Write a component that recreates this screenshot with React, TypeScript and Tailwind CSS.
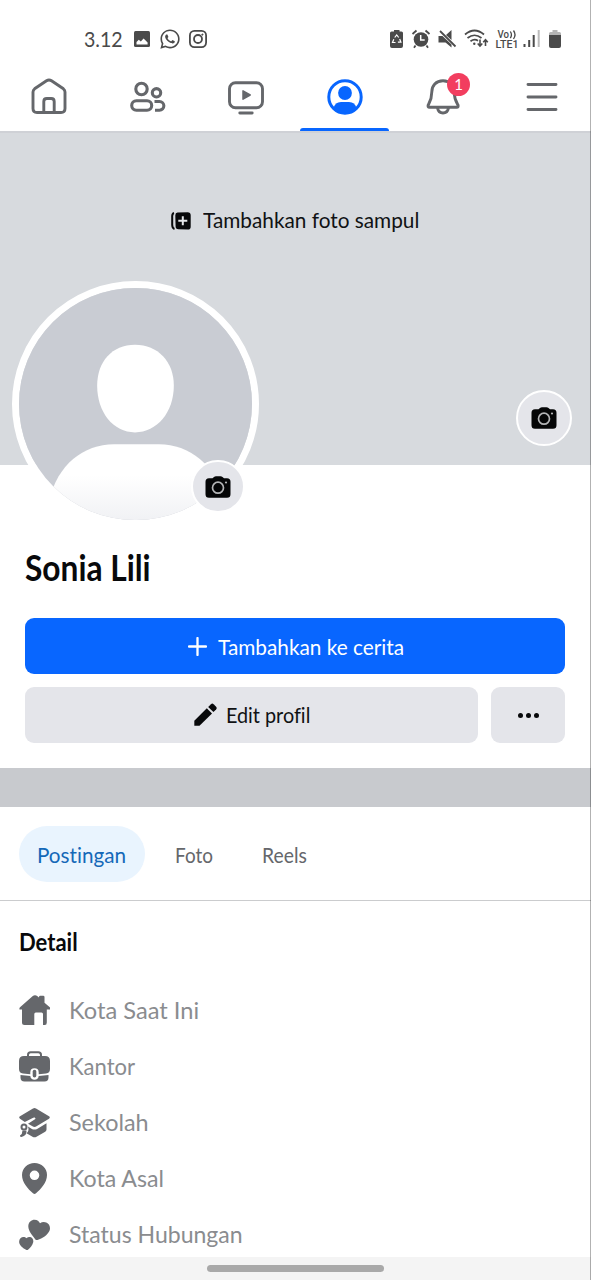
import type { ReactNode } from "react";
import { FaWhatsapp } from "react-icons/fa";

type LabelProps = {
  children: ReactNode;
  box: string;
  scale: string;
};

// condensed text: the box keeps the final width, the inner span is squeezed
function Label({ children, box, scale }: LabelProps) {
  return (
    <span className={`block shrink-0 whitespace-nowrap ${box}`}>
      <span className={`inline-block origin-left ${scale}`}>{children}</span>
    </span>
  );
}

function StatusBar() {
  return (
    <div className="flex h-[62px] items-start justify-between pl-[84px] pr-[29px] pt-[29px] text-[#4a4a4a]">
      <div className="flex h-5 items-center">
        <div className="text-[22px] leading-5">
          <Label box="w-[50px]" scale="scale-x-[0.89]">3.12</Label>
        </div>
        <svg className="h-4 w-4" viewBox="0 0 16 16">
          <rect width="16" height="16" rx="1.5" fill="currentColor" />
          <path d="M2.5 13.5V11l2.3-2.2 2 1.8 2.8-3.2 4 4v2.1z" fill="#fff" />
        </svg>
        <FaWhatsapp className="ml-[9px] h-[22px] w-[22px]" />
        <svg className="ml-2 h-[18px] w-[18px]" viewBox="0 0 18 18" fill="none" stroke="currentColor" strokeWidth="1.8">
          <rect x="0.9" y="0.9" width="16.2" height="16.2" rx="4.5" />
          <circle cx="9" cy="9" r="4" />
          <circle cx="13.4" cy="4.6" r="0.6" fill="currentColor" strokeWidth="1" />
        </svg>
      </div>
      <svg className="h-[26px] w-[173px] overflow-visible" viewBox="389 29 173 26" fill="none" stroke="currentColor">
        {/* power saving battery */}
        <path d="M394 30h5.500v1.500h2q1.500 0 1.500 1.500v13q0 2-2 2h-9q-2 0-2-2V33q0-1.500 1.500-1.500H394z" fill="currentColor" stroke="none" />
        <path d="M394.700 37.500l2-2.500 2 2.500M399.700 39l1.200 3.200h-3M395.500 42.500h-3l1.300-3.200" stroke="#fff" strokeWidth="1.200" />
        {/* alarm */}
        <circle cx="421" cy="39.500" r="7.300" fill="currentColor" stroke="none" />
        <path d="M412.500 34l4-3.500M429.500 34l-4-3.500M415.500 45.500l-1.500 2.300M426.500 45.500l1.500 2.300" strokeWidth="1.800" />
        <path d="M420.700 35v5h4" stroke="#fff" strokeWidth="1.500" />
        {/* muted */}
        <path d="M438.500 36h4l9 8.500v3l-6-5h-7zM446 35l5.500-5v10z" fill="currentColor" stroke="none" />
        <path d="M440 31l15.500 15.500" strokeWidth="1.800" />
        {/* wifi with traffic arrows */}
        <path d="M465 34.500q9.500-8 19 0M467.500 38q7-5.500 14 0M470.500 41.200q4-3 7.500-.5" strokeWidth="1.700" />
        <circle cx="474.300" cy="43.800" r="1.200" fill="currentColor" stroke="none" />
        <path d="M480 39.500v6M477.700 43.500l2.300 2.500 2.300-2.500M485.500 46v-6M483.200 42.200l2.300-2.500 2.300 2.500" strokeWidth="1.600" />
        <text x="497.500" y="37.500" fontSize="10" fontWeight="500" fill="currentColor" stroke="none" textLength="11.500" lengthAdjust="spacingAndGlyphs" className="font-[Roboto,sans-serif]">Vo</text>
        <path d="M510.300 31.500q2.300 3.300 0 6.700M513.500 30.500q3 4.200 0 8.500" strokeWidth="1.300" />
        <text x="495.500" y="48" fontSize="10.500" fontWeight="500" fill="currentColor" stroke="none" textLength="23" lengthAdjust="spacingAndGlyphs" className="font-[Roboto,sans-serif]">LTE1</text>
        {/* signal */}
        <path d="M524.500 44v3M529.200 40v7M533.700 35v12" strokeWidth="2" />
        <path d="M538.700 30v17" stroke="#bcbcbc" strokeWidth="2" />
        {/* battery */}
        <path d="M549 35v-1.500q0-1.500 1.500-1.500h2v-2h5v2h2q1.500 0 1.500 1.500V35z" fill="#b5b5b5" stroke="none" />
        <path d="M549 35h12v11q0 2-2 2h-8q-2 0-2-2z" fill="currentColor" stroke="none" />
      </svg>
    </div>
  );
}

const navIcons = [
  <path key="home" d="M6 17q0-2 1.600-3.200L19.500 5.800q2.500-1.700 5 0l11.900 8q1.600 1.200 1.600 3.200v16.500q0 4-4 4H10q-4 0-4-4zM16.800 37.500V26.500q0-3 3-3h4.400q3 0 3 3v11" />,
  <g key="friends" strokeWidth="3.1">
    <circle cx="15.500" cy="14" r="5.700" />
    <circle cx="30.500" cy="17.800" r="4.200" />
    <rect x="5.700" y="25.700" width="20" height="9.500" rx="4.700" />
    <path d="M28.500 26.500h5a4.300 4.300 0 0 1 0 8.700h-4.500" />
  </g>,
  <g key="video">
    <rect x="5.500" y="7.700" width="33" height="25" rx="6" />
    <path d="M15.800 38h12.400" strokeLinecap="round" />
    <path d="M19 15.800v8.400l7.200-4.200z" fill="currentColor" strokeWidth="1.500" strokeLinejoin="round" />
  </g>,
  <g key="profile">
    <circle cx="22" cy="22" r="16.200" strokeWidth="3" />
    <circle cx="22" cy="18" r="6.900" fill="currentColor" stroke="none" />
    <path d="M10.500 33q1.500-6 7.500-6h8q6 0 7.500 6-4.500 5-11.500 5t-11.500-5z" fill="currentColor" stroke="none" />
  </g>,
  <path key="bell" d="M22 5.800c-7 0-11.200 4.800-11.200 11.200 0 7-1.700 9.500-3.600 13q-.7 2.200 1.300 2.200h27.200q2 0 1.300-2.200C35 26.500 33.200 24 33.200 17 33.200 10.600 29 5.800 22 5.800zM16.500 33q1 5 5.500 5t5.500-5" />,
  <path key="menu" d="M8 9.500h28M8 22h28M8 34.500h28" strokeLinecap="round" />,
];

function NavBar() {
  return (
    <div className="grid h-[71px] grid-cols-6 border-b-2 border-[#cfd1d6]">
      {navIcons.map((icon, i) => (
        <div
          key={i}
          className={`relative flex flex-col items-center justify-between pt-[13px] ${i === 3 ? "text-[#0866ff]" : "text-[#65676b]"}`}
        >
          <svg className="h-11 w-11" viewBox="0 0 44 44" fill="none" stroke="currentColor" strokeWidth="2.900">
            {icon}
          </svg>
          {i === 3 && <div className="h-[3px] w-[89px] rounded-t-[3px] bg-[#0866ff]" />}
          {i === 4 && (
            <div className="absolute left-[53px] top-[11px] flex h-[23px] w-[23px] items-center justify-center rounded-full bg-[#f23e5f] text-[15px] text-white">
              1
            </div>
          )}
        </div>
      ))}
    </div>
  );
}

function CameraButton({ className }: { className: string }) {
  return (
    <div className={`absolute flex items-center justify-center rounded-full border-white bg-[#e4e5ea] ${className}`}>
      <svg className="h-[22px] w-[26px]" viewBox="0 0 26 22">
        <path d="M4 2.300h3.500L9 1q.8-.8 2-.8h4.500q1.200 0 2 .8l1.500 1.300H22Q25.500 2.300 25.500 5.800v12.500q0 3.500-3.500 3.500H4Q.5 21.800.5 18.300V5.800Q.5 2.300 4 2.300z" fill="#050607" />
        <circle cx="13" cy="11.700" r="5.500" fill="none" stroke="#b3b4b6" strokeWidth="1.700" />
        <circle cx="21" cy="6.500" r="1.100" fill="#b3b4b6" />
      </svg>
    </div>
  );
}

function Cover() {
  return (
    <div className="relative h-[332px] bg-[#d7dade]">
      <div className="flex items-center pl-[171px] pt-[74px] text-[22px] leading-7 text-[#101214]">
        <svg className="h-[18px] w-5" viewBox="0 0 20 18">
          <path d="M3 1Q1 1.500 1.200 5v8q.2 3.500 2.300 4" fill="none" stroke="#08090b" strokeWidth="2" />
          <path d="M6.500.5L17 .2q2.700.2 2.700 2.500v12q0 2.700-2.700 2.900l-9.500-.3q-3-.3-2.900-2.800L4.300 3.300Q4.300.8 6.500.5z" fill="#08090b" />
          <path d="M11.800 4.300v9M7.300 8.800h9" stroke="#e4e6e9" strokeWidth="2" />
        </svg>
        <div className="-mt-px mb-px ml-3">
          <Label box="w-[217px]" scale="scale-x-[0.945]">Tambahkan foto sampul</Label>
        </div>
      </div>
      <div className="absolute left-3 top-[148px] h-[246px] w-[247px] overflow-hidden rounded-full border-[7px] border-white">
        <svg className="h-full w-full" viewBox="0 0 233 233">
          <defs>
            <linearGradient id="body" x1="0" y1="0" x2="0" y2="1">
              <stop offset="0.400" stopColor="#fff" />
              <stop offset="1" stopColor="#f0f1f4" />
            </linearGradient>
          </defs>
          <rect x="-2" y="-2" width="237" height="237" fill="#c9ccd3" />
          <path d="M116 57c23 0 39 17 39 41 0 27-17 47-39 47s-38-20-38-47c0-24 15-41 38-41z" fill="#fff" />
          <path d="M30 213c8-35 34-56 65-56h45c31 0 57 21 65 56v22H30z" fill="url(#body)" />
        </svg>
      </div>
      <CameraButton className="left-[191px] top-[327px] h-[53px] w-[54px] border-2" />
      <CameraButton className="left-[516px] top-[257px] h-14 w-14 border-[2.500px]" />
    </div>
  );
}

function ProfileHeader() {
  return (
    <div className="px-[25px] pt-[79px]">
      <h1 className="text-[36px] font-bold leading-[46px] text-[#08090b]">
        <Label box="w-[126px]" scale="scale-x-[0.88]">Sonia Lili</Label>
      </h1>
      <div className="mt-[28px] flex h-14 w-[540px] items-center rounded-[9px] bg-[#0866ff] pl-[163px] text-[22px] text-white">
        <svg className="mr-[11px] h-[19px] w-[19px]" viewBox="0 0 19 19">
          <path d="M9.500 1v17M1 9.500h17" stroke="#fff" strokeWidth="2.300" strokeLinecap="round" />
        </svg>
        <Label box="w-[186px]" scale="scale-x-[0.945]">Tambahkan ke cerita</Label>
      </div>
      <div className="mt-[13px] flex w-[540px] gap-[13px]">
        <div className="flex h-14 w-[453px] items-center rounded-[9px] bg-[#e4e5ea] pb-px pl-[169px] text-[22px] text-[#101214]">
          <svg className="mr-[9px] h-[23px] w-[23px] shrink-0" viewBox="0 0 23 23" fill="#08090b">
            <path d="M.3 17.800L12.800 5.300l5.200 5.200L5.500 22.700H.3z" />
            <path d="M14.200 4L17 1.200q1.300-1.200 2.600 0l2.500 2.600q1.200 1.300 0 2.600L19.400 9z" />
          </svg>
          <Label box="w-[85px]" scale="scale-x-[0.9]">
            <span className="[font-variant-ligatures:none]">Edit profil</span>
          </Label>
        </div>
        <div className="flex h-14 flex-1 items-center justify-center gap-[3px] rounded-[9px] bg-[#e4e5ea]">
          <div className="h-[5px] w-[5px] rounded-full bg-[#08090b]" />
          <div className="h-[5px] w-[5px] rounded-full bg-[#08090b]" />
          <div className="h-[5px] w-[5px] rounded-full bg-[#08090b]" />
        </div>
      </div>
    </div>
  );
}

function Tabs() {
  return (
    <div className="flex h-[94px] items-start border-b border-[#cbccce] pl-[19px] pt-[19px] text-[22px] text-[#65676b]">
      <div className="flex h-14 w-[126px] items-center rounded-full bg-[#e9f4fe] pl-[18px] text-[#1468b8]">
        <Label box="w-[89px]" scale="scale-x-[0.94]">
          <span className="[font-variant-ligatures:none]">Postingan</span>
        </Label>
      </div>
      <div className="flex h-14 items-center pl-[30px]">
        <Label box="w-[37px]" scale="scale-x-[0.86]">Foto</Label>
      </div>
      <div className="flex h-14 items-center pl-[50px]">
        <Label box="w-[45px]" scale="scale-x-[0.88]">Reels</Label>
      </div>
    </div>
  );
}

const details = [
  {
    text: "Kota Saat Ini",
    box: "w-[130px]",
    scale: "scale-x-[0.985]",
    icon: <path d="M.5 14.500Q0 13 1.300 12L13.500 1.300q2.500-2 5 0l1.500 1.300V2q0-1.300 1.300-1.300h2.900q1.300 0 1.300 1.300v5.700l5 4.300q1.300 1 .8 2.500h-3.500v13q0 2.500-2 2.500H24V19q0-1.500-1.500-1.500h-5.700q-1.500 0-1.500 1.500v11H5.500Q3 30 3 27.500v-13z" />,
  },
  {
    text: "Kantor",
    box: "w-[66px]",
    scale: "scale-x-[0.92]",
    icon: (
      <>
        <path d="M9 6V4q0-2.700 2.700-2.700h7.600Q22 1.300 22 4v2" fill="none" stroke="currentColor" strokeWidth="2" />
        <path d="M5 5h21q5 0 5 5v8q0 4-4 4.500l-7.300.7v-1.700q0-4.200-4.200-4.200t-4.200 4.200v1.700L4 22.500q-4-.5-4-4.500v-8q0-5 5-5z" />
        <path d="M1.500 24l9.800.9q.5 3.800 4.200 3.800t4.200-3.800l9.800-.9v2.500q0 4-4 4H5.500q-4 0-4-4z" />
        <rect x="13.700" y="18.700" width="3.600" height="7.800" rx="1.800" />
      </>
    ),
  },
  {
    text: "Sekolah",
    box: "w-[79px]",
    scale: "scale-x-[0.975]",
    icon: (
      <>
        <path d="M14 1.500q1.500-.8 3 0l13 7.800q1.600 1.200 0 2.400l-12.500 7.600q-2 1.200-4 0L9 16.700l7-4.500q1-1-.3-1.700-.7-.3-1.500.2L5.800 15 1 11.700q-1.600-1.200 0-2.400z" />
        <path d="M9 19.500l3.500 2.200q3 1.700 6 0l9-5.500v6.300q0 1.500-1.300 2.300l-8.700 5q-2 1-4 0l-6-3.500q3-2 1.500-6.800z" />
        <circle cx="5" cy="20" r="2.500" fill="none" stroke="currentColor" strokeWidth="2" />
        <path d="M3.500 23.500h4q.5 5-5 6.500-1.700 0-1.500-1.500 2.500-1.500 2.500-5z" />
      </>
    ),
  },
  {
    text: "Kota Asal",
    box: "w-[95px]",
    scale: "scale-x-[0.965]",
    icon: <path fillRule="evenodd" d="M15.500 0C22.500 0 28 5.200 28 12c0 7.500-6 14-11 18.300q-1.500 1.200-3 0C9 26 3 19.500 3 12 3 5.200 8.500 0 15.500 0zm0 7.500a4.800 4.800 0 1 0 0 9.600 4.800 4.800 0 0 0 0-9.600z" />,
  },
  {
    text: "Status Hubungan",
    box: "w-[173px]",
    scale: "scale-x-[0.96]",
    icon: (
      <>
        <path d="M18.500 21q-1.500.3-2.300-.8C13 16 9.500 12.500 9.300 7.300 9.300 3 12.500.8 15.500.8c3 0 4.500 1.700 5.500 3.400 1.800-1.200 4-1.700 6.300-.7 3.200 1.500 4.500 5 3.200 8.200-2 4.500-7 7.500-12 9.300z" />
        <path d="M9 30.800q-1 .7-2 0C4 29 .7 27 .2 23.500-.3 20.300 2 18 4.500 18c1.500 0 2.500.7 3 1.300 1-1 2.300-1.500 3.700-1.200 2.300.5 3.500 2.800 3 5.200-.7 3.200-3 5.500-5.200 7.500z" />
      </>
    ),
  },
];

function Details() {
  return (
    <div className="px-[19px] pt-[24px]">
      <h2 className="text-[25px] font-bold leading-8 text-[#08090b]">
        <Label box="w-[58px]" scale="scale-x-[0.88]">Detail</Label>
      </h2>
      <div className="mt-[25px] flex flex-col text-[24px] text-[#8a8c8f]">
        {details.map((item) => (
          <div key={item.text} className="flex h-[56px] items-center gap-[19px]">
            <svg className="h-[31px] w-[31px] shrink-0 text-[#65676b]" viewBox="0 0 31 31" fill="currentColor">
              {item.icon}
            </svg>
            <Label box={item.box} scale={item.scale}>{item.text}</Label>
          </div>
        ))}
      </div>
    </div>
  );
}

export default function App() {
  return (
    <div className="relative flex h-[1280px] w-[591px] flex-col overflow-hidden bg-white font-[Lato,'Open_Sans',sans-serif]">
      <StatusBar />
      <NavBar />
      <Cover />
      <ProfileHeader />
      <div className="mt-[25px] h-[39px] shrink-0 bg-[#c8cace]" />
      <Tabs />
      <Details />
      <div className="absolute inset-x-0 bottom-0 flex h-[23px] items-center justify-center bg-[#f4f4f4]">
        <div className="h-[7px] w-[177px] rounded-full bg-[#a9a9a9]" />
      </div>
      <div className="absolute inset-y-0 right-0 w-px bg-black/30" />
    </div>
  );
}
